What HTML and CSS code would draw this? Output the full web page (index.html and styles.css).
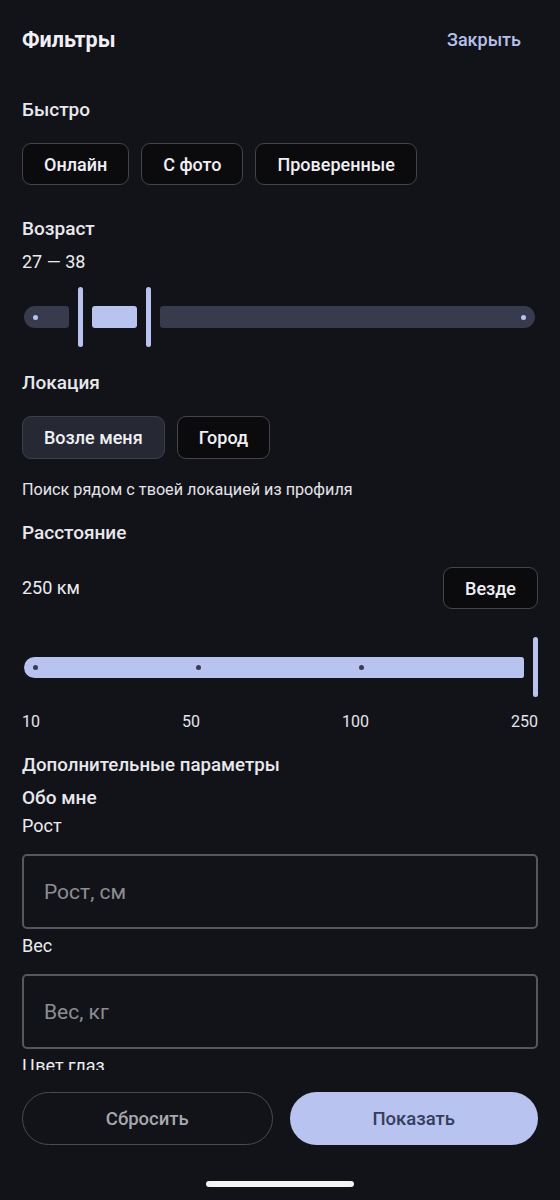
FILE: index.html
```html
<!DOCTYPE html>
<html lang="ru">
<head>
<meta charset="utf-8">
<title>Фильтры</title>
<link rel="stylesheet" href="styles.css">
</head>
<body>
<div class="screen">
  <header class="topbar">
    <h1 class="title">Фильтры</h1>
    <span class="close">Закрыть</span>
  </header>

  <main class="content">
    <div class="label label-quick">Быстро</div>
    <div class="chips chips-quick">
      <span class="chip">Онлайн</span>
      <span class="chip">С фото</span>
      <span class="chip">Проверенные</span>
    </div>

    <div class="label label-age">Возраст</div>
    <div class="value value-age">27 — 38</div>
    <div class="range">
      <div class="seg seg-left"><span class="dot dot-light"></span></div>
      <div class="handle"></div>
      <div class="seg seg-mid"></div>
      <div class="handle"></div>
      <div class="seg seg-right"><span class="dot dot-light"></span></div>
    </div>

    <div class="label label-loc">Локация</div>
    <div class="chips chips-loc">
      <span class="chip chip-active">Возле меня</span>
      <span class="chip">Город</span>
    </div>
    <p class="hint">Поиск рядом с твоей локацией из профиля</p>

    <div class="label label-dist">Расстояние</div>
    <div class="dist-row">
      <span class="value">250 км</span>
      <span class="chip">Везде</span>
    </div>
    <div class="slider">
      <div class="track">
        <span class="dot dot-dark"></span>
        <span class="dot dot-dark"></span>
        <span class="dot dot-dark"></span>
      </div>
      <div class="handle"></div>
    </div>
    <div class="ticks">
      <span>10</span><span>50</span><span>100</span><span>250</span>
    </div>

    <div class="label label-extra">Дополнительные параметры</div>
    <div class="label label-about">Обо мне</div>
    <div class="field-label field-label-first">Рост</div>
    <div class="input"><span class="placeholder">Рост, см</span></div>
    <div class="field-label">Вес</div>
    <div class="input"><span class="placeholder">Вес, кг</span></div>
    <div class="field-label">Цвет глаз</div>
  </main>

  <footer class="footer">
    <div class="actions">
      <span class="btn btn-reset">Сбросить</span>
      <span class="btn btn-show">Показать</span>
    </div>
    <div class="home-indicator"></div>
  </footer>
</div>
</body>
</html>
```

FILE: styles.css
```css
* { box-sizing: border-box; }
html, body {
  margin: 0;
  padding: 0;
  background: #121319;
}
body {
  font-family: Roboto, "Noto Sans", "Liberation Sans", sans-serif;
  color: #ececf0;
}
.screen {
  width: 560px;
  height: 1200px;
  display: flex;
  flex-direction: column;
  background: #121319;
  overflow: hidden;
}
.topbar {
  height: 78px;
  flex: none;
  display: flex;
  align-items: center;
  justify-content: space-between;
  padding: 0 39px 0 22px;
}
.title {
  margin: 0;
  font-size: 21.5px;
  font-weight: 700;
  color: #f0f0f4;
}
.close {
  font-size: 18px;
  font-weight: 500;
  color: #b5c0ec;
}
.content {
  flex: 1;
  min-height: 0;
  overflow: hidden;
  padding: 0 22px;
}
.label {
  font-size: 19px;
  line-height: 24px;
  font-weight: 500;
  color: #e8e8ed;
}
.label-quick { margin-top: 20px; }
.label-age { margin-top: 32px; }
.label-loc { margin-top: 24px; }
.label-dist { margin-top: 20px; }
.label-extra { margin-top: 20px; font-size: 18.7px; }
.label-about { margin-top: 9px; }

.value {
  font-size: 18px;
  line-height: 24px;
  color: #ececf0;
}
.value-age { margin-top: 9px; }

.chips {
  display: flex;
  gap: 12px;
  margin-top: 21px;
}
.chip {
  display: inline-flex;
  align-items: center;
  height: 42px;
  padding: 0 21px;
  border: 1.5px solid #44454b;
  border-radius: 9px;
  background: #0b0b0e;
  font-size: 18px;
  font-weight: 500;
  color: #f0f0f4;
}
.chips-loc .chip { height: 43px; }
.chip-active {
  background: #262833;
  border-color: #3c3e4a;
}

.range {
  margin-top: 13px;
  height: 60px;
  display: flex;
  align-items: center;
  gap: 9px;
  padding: 0 3px 0 2px;
}
.seg {
  height: 22px;
  display: flex;
  align-items: center;
  padding: 0 9px;
  background: #373b4d;
}
.seg-left {
  width: 45px;
  border-radius: 11px 3px 3px 11px;
}
.seg-mid {
  width: 45px;
  border-radius: 3px;
  background: #b8c3ef;
}
.seg-right {
  flex: 1;
  justify-content: flex-end;
  border-radius: 3px 11px 11px 3px;
}
.handle {
  width: 5px;
  height: 60px;
  border-radius: 3px;
  background: #b8c3ef;
  flex: none;
}
.dot {
  width: 5px;
  height: 5px;
  border-radius: 50%;
  flex: none;
}
.dot-light { background: #b8c3ef; }
.dot-dark { background: #383d52; }

.hint {
  margin: 20px 0 0;
  font-size: 16.2px;
  line-height: 22px;
  color: #e4e4ea;
}

.dist-row {
  margin-top: 22px;
  display: flex;
  align-items: center;
  justify-content: space-between;
}
.slider {
  margin-top: 28px;
  height: 60px;
  display: flex;
  align-items: center;
  gap: 9px;
  padding-left: 2px;
}
.track {
  width: 500px;
  height: 21px;
  display: flex;
  align-items: center;
  gap: 158px;
  padding-left: 9px;
  background: #b8c3ef;
  border-radius: 11px 3px 3px 11px;
}
.ticks {
  margin-top: 14px;
  display: flex;
  justify-content: space-between;
  font-size: 16px;
  line-height: 22px;
  color: #e4e4ea;
}

.field-label {
  margin-top: 5px;
  font-size: 18px;
  line-height: 24px;
  color: #ececf0;
}
.field-label-first { margin-top: 4px; }
.input {
  margin-top: 16px;
  height: 75px;
  display: flex;
  align-items: center;
  padding: 0 20px;
  border: 2px solid #56575c;
  border-radius: 5px;
}
.placeholder {
  font-size: 21px;
  color: #8d8d93;
}

.footer {
  flex: none;
  height: 130px;
  padding: 22px 22px 0;
}
.actions {
  display: flex;
  gap: 17px;
}
.btn {
  flex: 1;
  height: 53px;
  display: flex;
  align-items: center;
  justify-content: center;
  border-radius: 27px;
  font-size: 18.5px;
  font-weight: 500;
}
.btn-reset {
  border: 1.5px solid #4a4b50;
  color: #a7a8ae;
}
.btn-show {
  background: #b8c3ef;
  color: #363d5c;
}
.home-indicator {
  width: 148px;
  height: 6px;
  margin: 36px auto 0;
  border-radius: 3px;
  background: #f4f4f6;
}
```
